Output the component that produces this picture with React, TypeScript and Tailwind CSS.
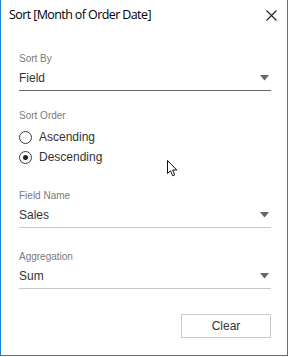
import React from "react";

function Caret() {
  return (
    <svg width="9" height="6" viewBox="0 0 9 6" className="shrink-0 mr-[2px]">
      <polygon points="0,0 9,0 4.5,5.5" fill="#666666" />
    </svg>
  );
}

function Select({ label, value, dark }: { label: string; value: string; dark?: boolean }) {
  return (
    <div className="flex flex-col">
      <div className="text-[10px] leading-[12px] text-[#7a7a7a]">{label}</div>
      <div
        className={
          "flex items-center justify-between pt-[5px] pb-[4px] border-b " +
          (dark ? "border-[#6b6b6b]" : "border-[#c8c8c8]")
        }
      >
        <span className="text-[12px] leading-[16px] text-[#333333]">{value}</span>
        <Caret />
      </div>
    </div>
  );
}

function Radio({ label, checked }: { label: string; checked?: boolean }) {
  return (
    <div className="flex items-center h-[20px]">
      <div className="w-[13px] h-[13px] rounded-full border border-[#3c3c3c] flex items-center justify-center bg-white">
        {checked && <div className="w-[5px] h-[5px] rounded-full bg-[#222222]" />}
      </div>
      <span className="ml-[7px] text-[12px] leading-[16px] text-[#333333]">{label}</span>
    </div>
  );
}

export default function App() {
  return (
    <div className="w-[289px] h-[357px] bg-white" style={{ fontFamily: '"Liberation Sans", Arial, sans-serif' }}>
      <div className="relative w-[288px] h-[356px] border-x border-b border-[#1a7fd4] bg-white flex flex-col">
        <div className="flex items-center justify-between h-[31px] pl-[8px] pr-[9px]">
          <span
            className="text-[12.5px] text-black"
            style={{ fontFamily: '"Open Sans", "Noto Sans", sans-serif', letterSpacing: "-0.6px" }}
          >
            Sort [Month of Order Date]
          </span>
          <svg width="11" height="11" viewBox="0 0 11 11" className="mr-[1px]">
            <path d="M0.5 0.5 L10.5 10.5 M10.5 0.5 L0.5 10.5" stroke="#222" strokeWidth="1.1" />
          </svg>
        </div>
        <div className="flex flex-col pl-[18px] pr-[16px] pt-[22px]">
          <Select label="Sort By" value="Field" dark />
          <div className="mt-[19px] flex flex-col">
            <div className="text-[10px] leading-[12px] text-[#7a7a7a]">Sort Order</div>
            <div className="mt-[5px] flex flex-col">
              <Radio label="Ascending" />
              <Radio label="Descending" checked />
            </div>
          </div>
          <div className="mt-[23px]">
            <Select label="Field Name" value="Sales" />
          </div>
          <div className="mt-[23px]">
            <Select label="Aggregation" value="Sum" />
          </div>
          <div className="mt-[25px] flex justify-end">
            <button className="w-[90px] h-[24px] border border-[#cccccc] bg-white text-[12px] text-[#333333] flex items-center justify-center">
              Clear
            </button>
          </div>
        </div>
        <svg
          width="12"
          height="18"
          viewBox="0 0 12 18"
          className="absolute left-[166px] top-[160px]"
        >
          <path
            d="M0.5 0.5 L0.5 13.5 L3.5 10.8 L5.7 15.8 L7.7 14.9 L5.6 10 L9.8 10 Z"
            fill="white"
            stroke="#111"
            strokeWidth="1"
            strokeLinejoin="miter"
          />
        </svg>
      </div>
    </div>
  );
}
